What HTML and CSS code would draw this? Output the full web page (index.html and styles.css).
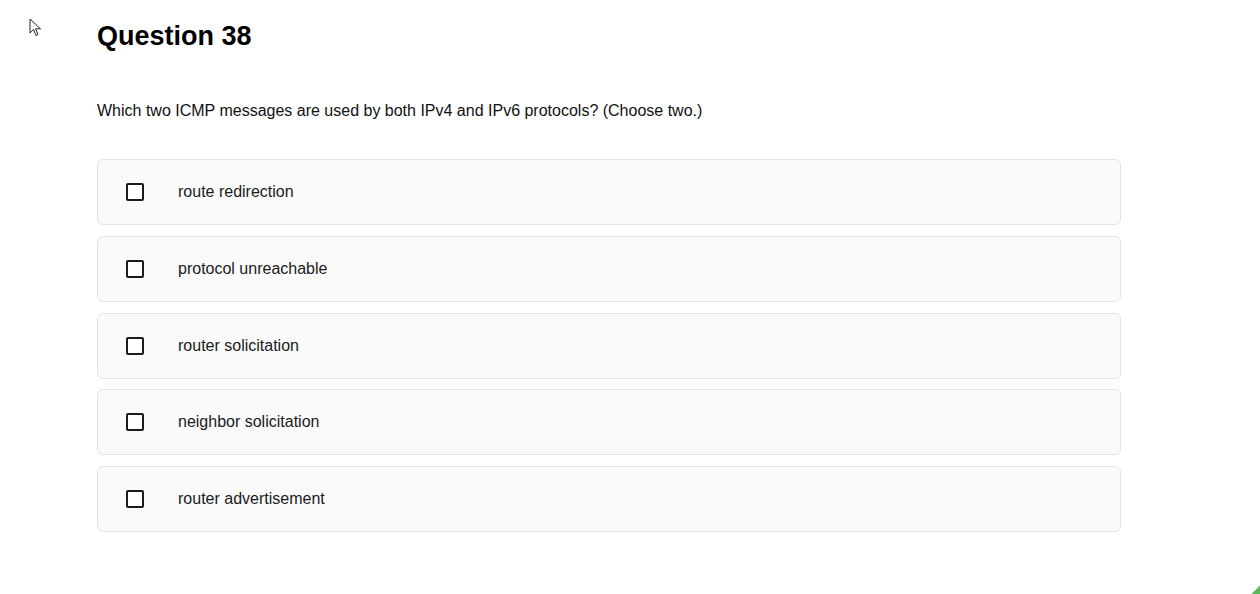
FILE: index.html
```html
<!DOCTYPE html>
<html>
<head>
<meta charset="utf-8">
<link rel="stylesheet" href="styles.css">
</head>
<body>
<svg class="cursor" width="14" height="20" viewBox="0 0 14 20"><path d="M1 1 L1 15 L4.5 11.5 L7 17.5 L9 16.6 L6.6 10.8 L11.5 10.8 Z" fill="#fff" stroke="#222" stroke-width="1" stroke-linejoin="miter"/></svg>
<main class="quiz">
  <h1 class="title">Question 38</h1>
  <p class="prompt">Which two ICMP messages are used by both IPv4 and IPv6 protocols? (Choose two.)</p>
  <div class="options">
    <label class="option"><span class="box"></span><span class="text">route redirection</span></label>
    <label class="option"><span class="box"></span><span class="text">protocol unreachable</span></label>
    <label class="option"><span class="box"></span><span class="text">router solicitation</span></label>
    <label class="option"><span class="box"></span><span class="text">neighbor solicitation</span></label>
    <label class="option"><span class="box"></span><span class="text">router advertisement</span></label>
  </div>
</main>
<div class="corner"></div>
</body>
</html>
```
FILE: styles.css
```css
html, body {
  margin: 0;
  padding: 0;
  background: #fff;
  height: 594px;
  overflow: hidden;
}
body {
  font-family: "Liberation Sans", Arial, sans-serif;
  color: #111;
  position: relative;
}
.cursor {
  position: absolute;
  left: 29px;
  top: 18px;
}
.quiz {
  width: 1024px;
  margin-left: 97px;
  padding-top: 19px;
}
.title {
  margin: 0;
  font-size: 27px;
  font-weight: bold;
  line-height: 34px;
  color: #000;
}
.prompt {
  margin: 0;
  margin-top: 48px;
  font-size: 16px;
  line-height: 20px;
  color: #111;
}
.options {
  margin-top: 38px;
  display: flex;
  flex-direction: column;
  gap: 10.75px;
}
.option {
  box-sizing: border-box;
  display: flex;
  align-items: center;
  height: 66px;
  border: 1px solid #e3e4e8;
  border-radius: 6px;
  background: #fafafa;
  padding-left: 28px;
}
.box {
  width: 14px;
  height: 14px;
  border: 2px solid #1b1b1f;
  border-radius: 2px;
  background: #fff;
  flex: none;
}
.text {
  margin-left: 34px;
  font-size: 16px;
  color: #1a1a1a;
}
.corner {
  position: absolute;
  right: -6px;
  bottom: -6px;
  width: 12px;
  height: 12px;
  background: #5cb85c;
  transform: rotate(45deg);
}
```
